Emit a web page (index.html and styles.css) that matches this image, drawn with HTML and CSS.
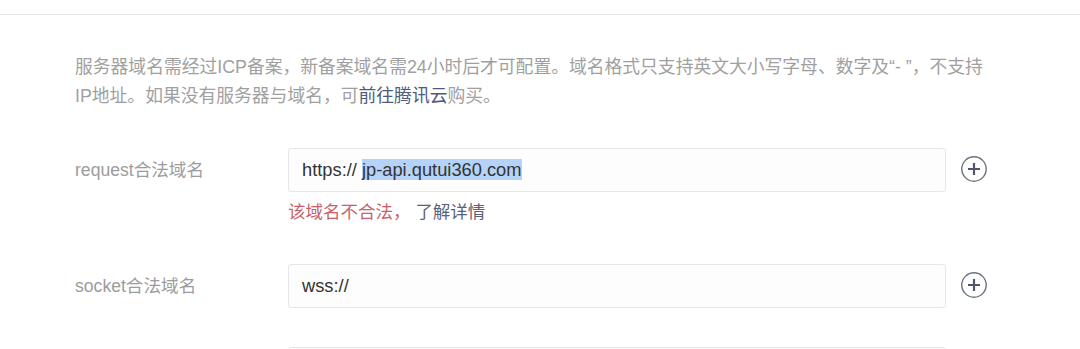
FILE: index.html
```
<!DOCTYPE html>
<html lang="zh-CN">
<head>
  <meta charset="UTF-8" />
  <meta name="viewport" content="width=device-width, initial-scale=1.0" />
  <title>服务器域名</title>
  <link rel="stylesheet" href="styles.css">
</head>
<body>
  <div class="top-bar"></div>
  <div class="content">
    <p class="tips">服务器域名需经过ICP备案，新备案域名需24小时后才可配置。域名格式只支持英文大小写字母、数字及“- ”，不支持<br>
    IP地址。如果没有服务器与域名，可<a href="#" class="link">前往腾讯云</a>购买。</p>

    <div class="form-row">
      <label class="label">request合法域名</label>
      <div class="field">
        <div class="input">https:// <span class="selected">jp-api.qutui360.com</span></div>
        <div class="error">该域名不合法， <a href="#" class="more">了解详情</a></div>
      </div>
      <button class="add-btn" type="button">
        <svg width="26" height="26" viewBox="0 0 26 26">
          <circle cx="13" cy="13" r="12.2" fill="none" stroke="#6d7280" stroke-width="1.4"/>
          <path d="M13 7v12M7 13h12" stroke="#4f566a" stroke-width="2.2"/>
        </svg>
      </button>
    </div>

    <div class="form-row">
      <label class="label">socket合法域名</label>
      <div class="field">
        <div class="input">wss://</div>
      </div>
      <button class="add-btn" type="button">
        <svg width="26" height="26" viewBox="0 0 26 26">
          <circle cx="13" cy="13" r="12.2" fill="none" stroke="#6d7280" stroke-width="1.4"/>
          <path d="M13 7v12M7 13h12" stroke="#4f566a" stroke-width="2.2"/>
        </svg>
      </button>
    </div>

    <div class="form-row">
      <label class="label"></label>
      <div class="field">
        <div class="input"></div>
      </div>
    </div>
  </div>
</body>
</html>
```

FILE: styles.css
```
body {
  margin: 0;
  font-family: "Liberation Sans", "Noto Sans CJK SC", sans-serif;
  background: #fff;
  color: #353535;
  overflow: hidden;
}
.top-bar {
  height: 14px;
  border-bottom: 1px solid #e4e4e4;
}
.content {
  padding-left: 75px;
}
.tips {
  margin: 38px 0 37px;
  font-size: 17.8px;
  line-height: 29px;
  color: #a0a0a0;
}
.link {
  color: #4e5b7c;
  text-decoration: none;
}
.form-row {
  display: grid;
  grid-template-columns: 213px 658px 26px;
  margin-bottom: 39px;
}
.label {
  font-size: 17.6px;
  line-height: 44px;
  color: #9c9c9c;
}
.input {
  box-sizing: border-box;
  height: 44px;
  padding: 0 13px;
  border: 1px solid #e6e6e6;
  border-radius: 3px;
  background: #fdfdfd;
  font-size: 18.3px;
  line-height: 42px;
  color: #333;
}
.selected {
  background: #b5d3f8;
}
.error {
  margin-top: 8px;
  font-size: 17.5px;
  line-height: 25px;
  color: #c86169;
}
.more {
  color: #5b6275;
  text-decoration: none;
}
.add-btn {
  align-self: start;
  margin: 8px 0 0 15px;
  padding: 0;
  border: none;
  background: none;
  width: 26px;
  height: 26px;
  cursor: pointer;
}
.add-btn svg {
  display: block;
}
```
